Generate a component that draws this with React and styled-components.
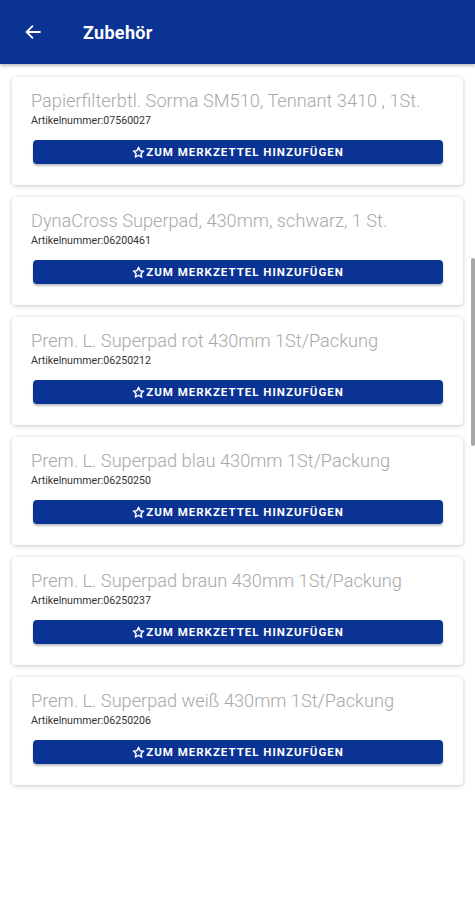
import React from 'react';
import styled, { createGlobalStyle } from 'styled-components';

const Global = createGlobalStyle`
    body{
        margin:0;
        background:#ffffff;
        font-family:Roboto, "Noto Sans", sans-serif;
    }
`;

const Page = styled.div`
    width:475px;
    height:900px;
    position:relative;
    overflow:hidden;
    background:#fff;
`;

const Header = styled.header`
    height:64px;
    background:#0b3393;
    display:flex;
    align-items:center;
    padding:0 0 0 24px;
    box-sizing:border-box;
    box-shadow:0 2px 3px rgba(0,0,0,0.25);
    color:#fff;
`;

const Back = styled.div`
    width:18px;
    height:18px;
    display:flex;
    align-items:center;
    justify-content:center;
    margin:0 41px 0 0;
`;

const Title = styled.h1`
    margin:0;
    font-size:18px;
    font-weight:700;
    letter-spacing:0.3px;
`;

const List = styled.div`
    display:flex;
    flex-direction:column;
    gap:12px;
    padding:13px 12px 0;
`;

const Card = styled.div`
    background:#fff;
    border-radius:4px;
    box-shadow:0 1px 4px rgba(0,0,0,0.22);
    padding:13px 20px 21px 19px;
    display:flex;
    flex-direction:column;
    height:108px;
    box-sizing:border-box;
`;

const Name = styled.div`
    font-size:18.2px;
    font-weight:300;
    color:#a8a8a8;
    line-height:22px;
    white-space:nowrap;
`;

const Number = styled.div`
    font-size:10.6px;
    color:#333;
    line-height:13px;
    margin:2px 0 0;
`;

const AddButton = styled.button`
    margin:13px 0 0 2px;
    height:24px;
    border:none;
    border-radius:4px;
    background:#0b3393;
    color:#fff;
    font-family:Roboto, sans-serif;
    font-size:11.5px;
    font-weight:700;
    letter-spacing:1px;
    display:flex;
    align-items:center;
    justify-content:center;
    gap:1px;
    box-shadow:0 2px 2px rgba(0,0,0,0.25);
    padding:0;
`;

const Scroll = styled.div`
    position:absolute;
    right:0;
    top:258px;
    width:4px;
    height:188px;
    border-radius:2px;
    background:#a6a6a6;
`;

const items = [
    ['Papierfilterbtl. Sorma SM510, Tennant 3410 , 1St.', '07560027'],
    ['DynaCross Superpad, 430mm, schwarz, 1 St.', '06200461'],
    ['Prem. L. Superpad rot 430mm 1St/Packung', '06250212'],
    ['Prem. L. Superpad blau 430mm 1St/Packung', '06250250'],
    ['Prem. L. Superpad braun 430mm 1St/Packung', '06250237'],
    ['Prem. L. Superpad weiß 430mm 1St/Packung', '06250206'],
];

const Star = () => (
    <svg width="13" height="13" viewBox="0 0 24 24" fill="none" stroke="#fff" strokeWidth="2.6" strokeLinejoin="round">
        <path d="M12 2.5l2.9 6.2 6.6.7-4.9 4.5 1.4 6.6L12 17.1l-5.9 3.4 1.4-6.6-4.9-4.5 6.6-.7z" />
    </svg>
);

export default function App() {
    return (
        <Page>
            <Global />
            <Header>
                <Back>
                    <svg width="18" height="18" viewBox="0 0 24 24" fill="none" stroke="#fff" strokeWidth="2.4" strokeLinecap="square">
                        <path d="M21 12H4M11 4.5L3.5 12l7.5 7.5" />
                    </svg>
                </Back>
                <Title>Zubehör</Title>
            </Header>
            <List>
                {items.map(([name, nr]) => (
                    <Card key={nr}>
                        <Name>{name}</Name>
                        <Number>Artikelnummer:{nr}</Number>
                        <AddButton><Star />ZUM MERKZETTEL HINZUFÜGEN</AddButton>
                    </Card>
                ))}
            </List>
            <Scroll />
        </Page>
    );
}
